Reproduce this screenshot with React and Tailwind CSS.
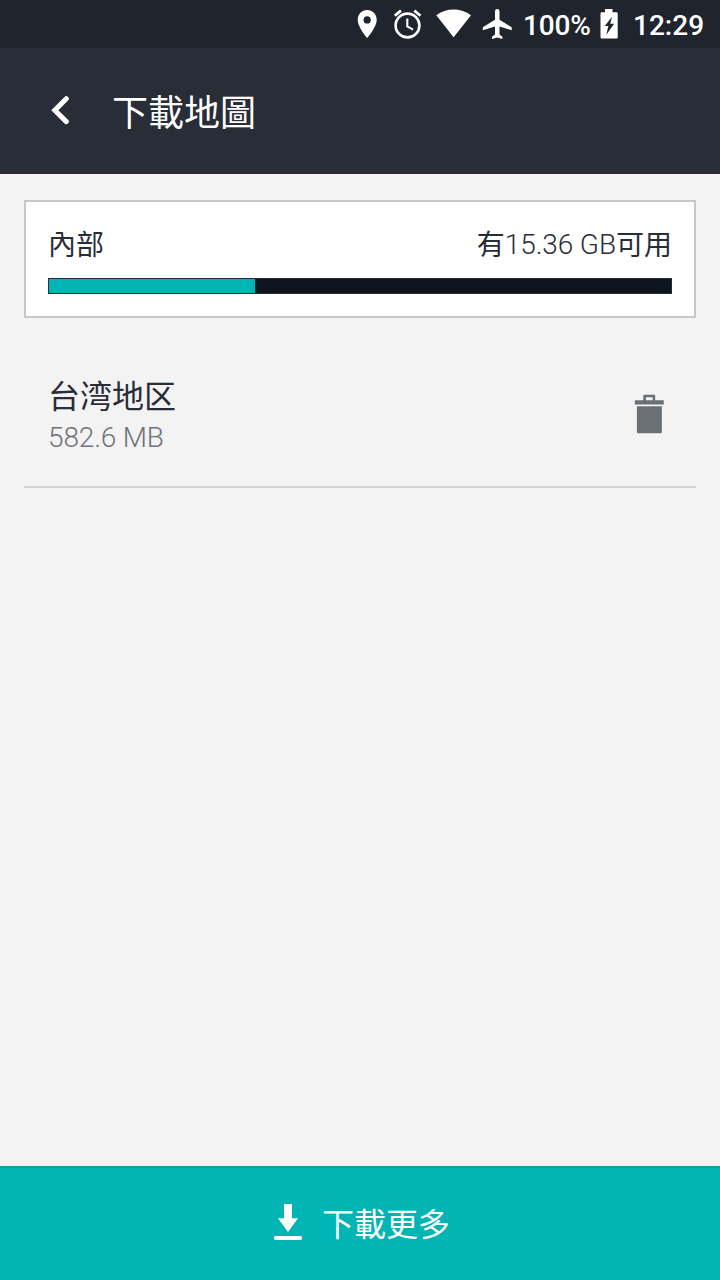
import React from 'react';

const storage = { total: 23, used: 7.62 };

const PinIcon = () => (
  <svg width="20" height="28" viewBox="0 0 20 28" fill="#fff" className="ml-[357px]">
    <path
      fillRule="evenodd"
      d="M10.200 0C4.800 0 .7 4.300.7 9.700.7 17 10.200 28 10.200 28s9.500-11 9.500-18.300C19.700 4.300 15.600 0 10.200 0Zm0 6.300a3.600 3.600 0 1 1 0 7.200 3.600 3.600 0 0 1 0-7.200Z"
    />
  </svg>
);

const AlarmIcon = () => (
  <svg width="28" height="30" viewBox="0 0 28 30" fill="none" stroke="#fff" className="ml-[17px]">
    <circle cx="13.500" cy="16.500" r="11.900" strokeWidth="2.600" />
    <path d="M13.300 9.500v7.800l5.700 3.400" strokeWidth="2.100" />
    <path d="M.8 6.700 7 1.600M26.500 6.700l-6.200-5.100" strokeWidth="2.700" />
  </svg>
);

const WifiIcon = () => (
  <svg width="36" height="30" viewBox="0 0 36 30" fill="#fff" className="ml-[14px]">
    <path d="M.3 6.200C5.300 2.300 11.300.4 17.600.4S30 2.300 35 6.200L17.600 28.200Z" />
  </svg>
);

const AirplaneIcon = () => (
  <svg width="30" height="31" viewBox="0 0 30 31" fill="#fff" className="ml-[10px]">
    <path d="M29.700 21.200v-3L17.500 10.700V2.300a2.250 2.250 0 0 0-4.500 0v8.400L.8 18.200v3l12.200-3.700v8l-3 2.200V30l5.200-1.500 5.200 1.500v-2.300l-2.900-2.200v-8Z" />
  </svg>
);

const BatteryIcon = () => (
  <svg width="18" height="30" viewBox="0 0 18 30" className="ml-[9px]">
    <path
      fill="#fff"
      d="M5 0h7.500v3.300h3.900c.7 0 1.300.6 1.300 1.300v23.600c0 .8-.6 1.300-1.300 1.300H1.800C1 29.500.5 29 .5 28.200V4.600c0-.7.5-1.300 1.300-1.300H5Z"
    />
    <path fill="#20242d" d="M12 7.800 4.800 17h3.600L6.200 26l7.900-11.300h-3.900Z" />
  </svg>
);

const BackIcon = () => (
  <svg width="20" height="30" viewBox="0 0 20 30" fill="none" stroke="#fff">
    <path d="M16.300 3.700 4.800 15.300l11.500 11.300" strokeWidth="5" strokeLinecap="round" />
  </svg>
);

const TrashIcon = () => (
  <svg width="30" height="40" viewBox="0 0 30 40" fill="#6b6f76">
    <path
      fillRule="evenodd"
      d="M10.700.8h9.200c.8 0 1.300.5 1.300 1.300v4.100h8.600v4.300H.8V6.200h8.500V2.100c0-.8.600-1.300 1.400-1.300ZM12 3.200v3h6.600v-3Z"
    />
    <path d="M2.900 12.200h25v25.500c0 1-.6 1.600-1.600 1.600H4.500c-1 0-1.600-.6-1.600-1.600Z" />
  </svg>
);

const DownloadIcon = () => (
  <svg width="28" height="36" viewBox="0 0 28 36" fill="#fff">
    <path d="M10 0h8v14.200h6L14 28 4 14.200h6Z" />
    <rect y="32" width="28" height="4" rx="1.500" />
  </svg>
);

const StatusBar = () => (
  <div className="flex h-12 items-center bg-[#20242d] font-['Roboto',sans-serif] text-[28px] font-medium text-white">
    <PinIcon />
    <AlarmIcon />
    <WifiIcon />
    <AirplaneIcon />
    <span className="ml-[11px] w-[68px] whitespace-nowrap pt-[3px] tracking-[-0.2px]">100%</span>
    <BatteryIcon />
    <span className="ml-[15px] whitespace-nowrap pt-[3px]">12:29</span>
  </div>
);

const Header = () => (
  <header className="flex h-[126px] items-center bg-[#292d37] pl-[50px] text-white">
    <button type="button" className="mb-[3px]">
      <BackIcon />
    </button>
    <h1 className="mt-[5px] ml-[42px] text-[36px] leading-none">下載地圖</h1>
  </header>
);

const StorageCard = () => (
  <section className="h-[118px] border-2 border-[#c6c7cb] bg-white px-[22px] pt-6">
    <div className="flex h-10 items-center justify-between text-[28px] leading-10">
      <span>內部</span>
      <span className="flex">
        有<span className="-mt-px font-light tracking-[-0.1px]">15.36 GB</span>可用
      </span>
    </div>
    <div className="mt-3 h-4 border border-[#20303b] bg-[#0e1420]">
      <div className="h-full bg-[#00b5b3]" style={{ width: `${(storage.used / storage.total) * 100}%` }} />
    </div>
  </section>
);

const MapRow = ({ name, size }) => (
  <div className="mt-[26px] flex h-36 items-center justify-between border-b-2 border-[#d3d3d4] pr-8 pl-6">
    <div className="mt-0.5">
      <p className="font-['Roboto','Noto_Sans_CJK_SC',sans-serif] text-[32px] leading-[44px]" lang="zh-CN">
        {name}
      </p>
      <p className="text-[28px] leading-[38px] font-light tracking-[-0.15px] text-[#70737a]">{size}</p>
    </div>
    <button type="button" className="mb-0.5">
      <TrashIcon />
    </button>
  </div>
);

export default function App() {
  return (
    <div
      lang="zh-TW"
      className="flex h-[1280px] w-[720px] flex-col overflow-hidden bg-[#f3f3f3] font-['Roboto','Noto_Sans_CJK_TC',sans-serif] text-[#292d37]"
    >
      <StatusBar />
      <Header />
      <main className="flex-1 px-6 pt-[26px]">
        <StorageCard />
        <MapRow name="台湾地区" size="582.6 MB" />
      </main>
      <button
        type="button"
        className="flex h-[114px] items-center justify-center gap-5 border-t-2 border-[#1c9a99] bg-[#00b5b3] pl-1 text-[32px] text-white"
      >
        <span className="mb-1">
          <DownloadIcon />
        </span>
        <span className="pt-0.5">下載更多</span>
      </button>
    </div>
  );
}
